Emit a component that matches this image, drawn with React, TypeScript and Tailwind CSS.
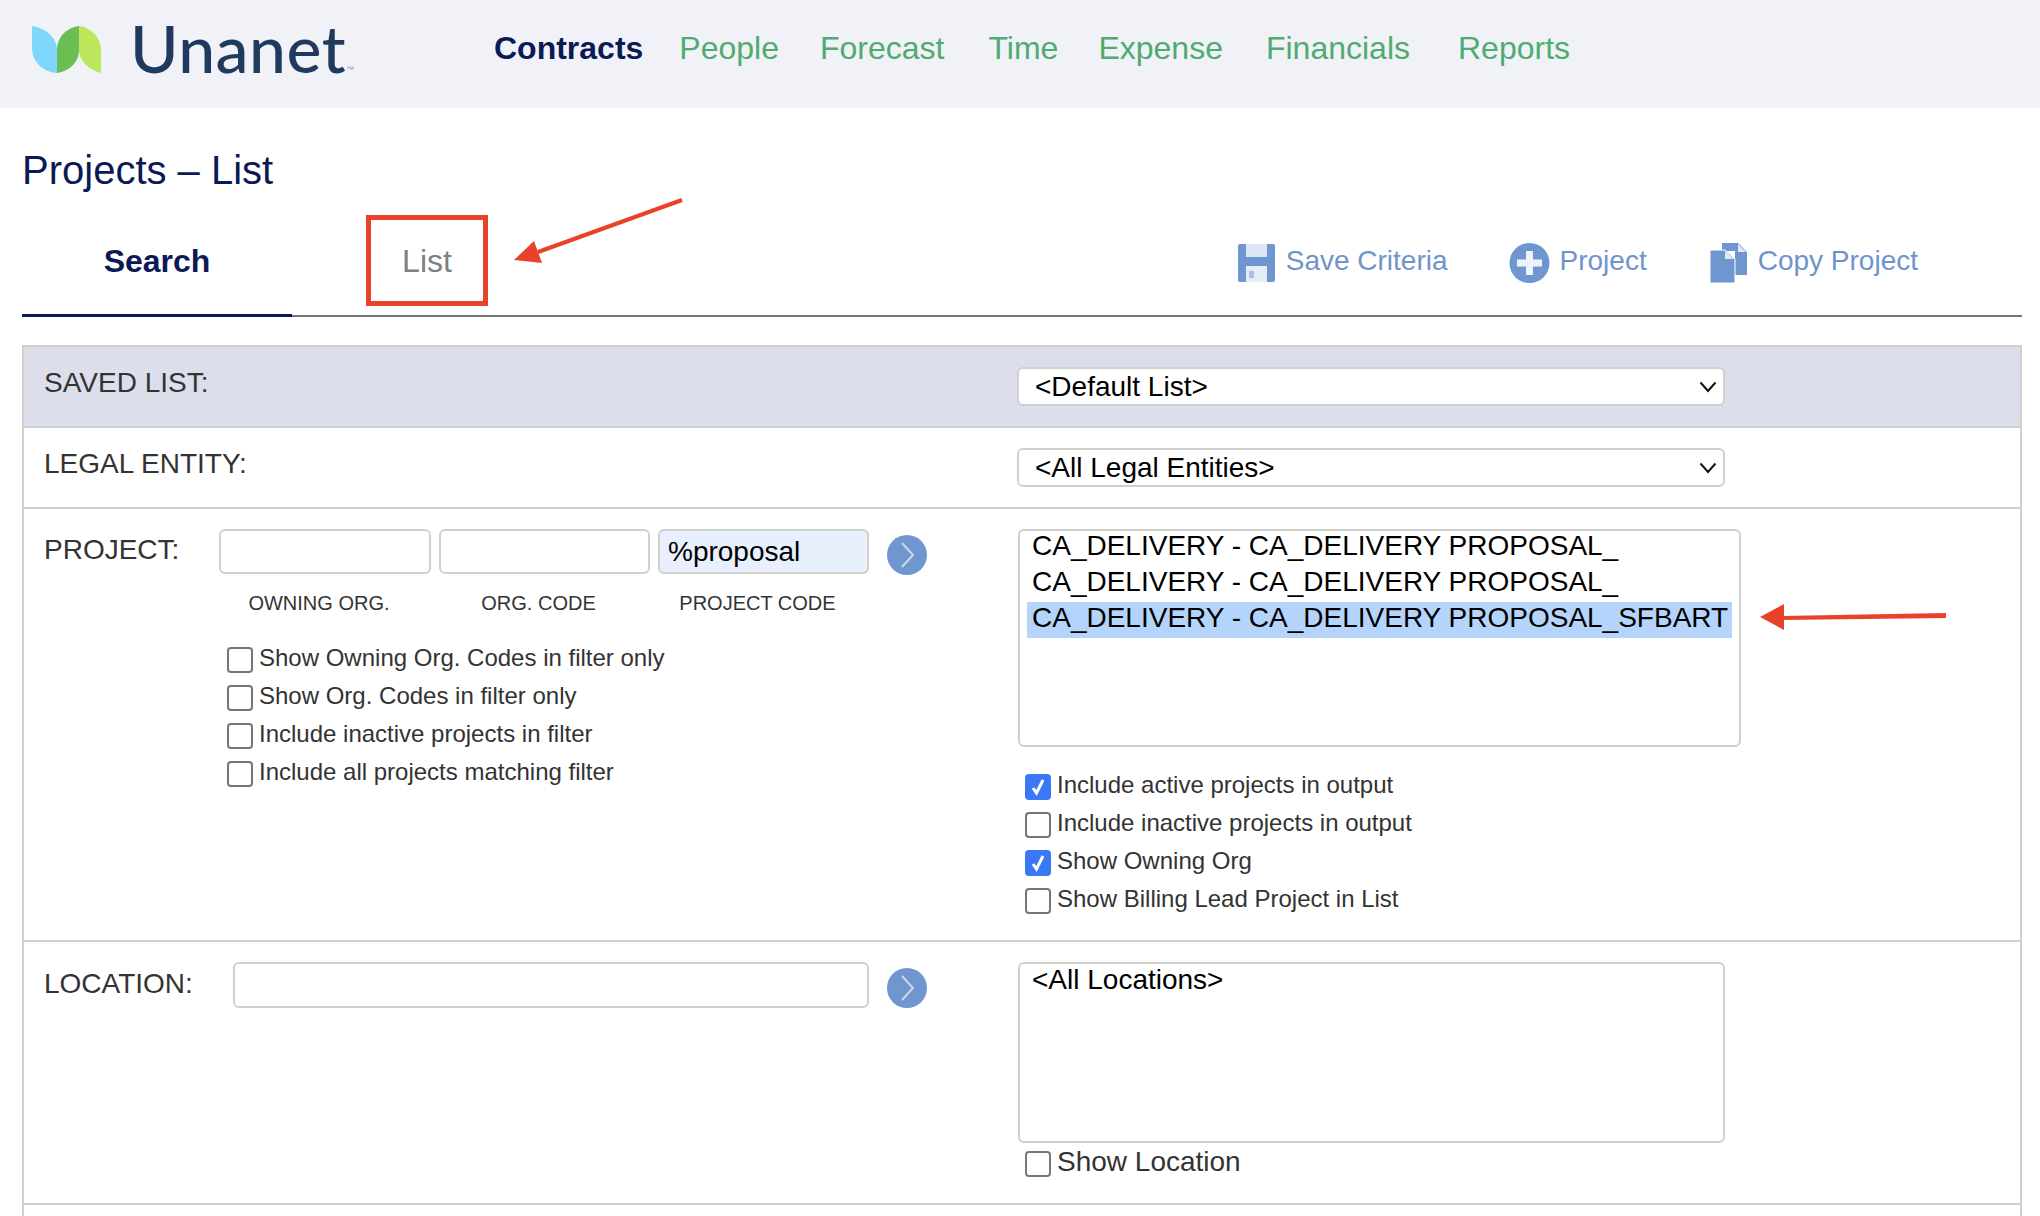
import { ReactNode } from 'react'

const navItems = [
  { label: 'People', className: 'ml-[36px]' },
  { label: 'Forecast', className: 'ml-[41px]' },
  { label: 'Time', className: 'ml-[44px]' },
  { label: 'Expense', className: 'ml-[40px]' },
  { label: 'Financials', className: 'ml-[43px]' },
  { label: 'Reports', className: 'ml-[48px]' },
]

function Logo() {
  return (
    <div className="flex items-start">
      <svg width="72" height="48" viewBox="0 0 72 48">
        <path d="M0 0C14 2 25 12 25 24V47C11 46 0 36 0 22Z" fill="#7fd6fd" />
        <path d="M47 0C33 2 25 12 25 24V47C38 45 47 36 47 24Z" fill="#6bbf52" />
        <path d="M47 0C60 2 69 12 69 24V47C57 44 47 35 47 24Z" fill="#bce65c" />
      </svg>
      <span className="ml-[26px] mt-[-2px] font-['Lato',sans-serif] text-[66px] font-medium leading-[48px] tracking-[0.5px] text-[#1f3a5c]">
        Unanet
      </span>
      <span className="mt-[40px] text-[8px] leading-[8px] text-[#8a97a8]">™</span>
    </div>
  )
}

function Chevron() {
  return (
    <svg width="40" height="40" viewBox="0 0 40 40" className="shrink-0">
      <circle cx="20" cy="20" r="20" fill="#7096cf" />
      <path d="M15 8L26 20L15 32" fill="none" stroke="#c9d8ef" strokeWidth="2" />
    </svg>
  )
}

function Check({ checked = false }: { checked?: boolean }) {
  if (checked) {
    return (
      <span className="flex h-[26px] w-[26px] shrink-0 items-center justify-center rounded-[4px] bg-[#3b78f5]">
        <svg width="18" height="20" viewBox="0 0 18 20">
          <path d="M4 11L7.500 16L14 3" fill="none" stroke="#fff" strokeWidth="3" />
        </svg>
      </span>
    )
  }
  return <span className="h-[26px] w-[26px] shrink-0 rounded-[4px] border-2 border-[#767676] bg-white" />
}

function CheckRow({ label, checked, large }: { label: string; checked?: boolean; large?: boolean }) {
  return (
    <div className="flex h-[26px] items-center gap-[6px]">
      <Check checked={checked} />
      <span className={`${large ? 'text-[28px]' : 'text-[24px]'} mt-[-4px] leading-[26px] text-[#333]`}>{label}</span>
    </div>
  )
}

function FakeSelect({ label }: { label: string }) {
  return (
    <div className="flex h-[39px] w-[708px] items-center justify-between rounded-[6px] border-2 border-[#d0d0cc] bg-white pl-[16px] pr-[6px]">
      <span className="text-[28px] leading-[34px] text-black">{label}</span>
      <svg width="18" height="12" viewBox="0 0 18 12">
        <path d="M1.5 1.5L9 10L16.5 1.5" fill="none" stroke="#111" strokeWidth="2" />
      </svg>
    </div>
  )
}

function TextInput({ className, value }: { className: string; value?: string }) {
  return (
    <input
      readOnly
      value={value ?? ''}
      className={`${className} rounded-[6px] border-2 border-[#d0d0cc] px-[8px] text-[28px] text-black outline-none`}
    />
  )
}

function FieldCaption({ children, className }: { children: ReactNode; className: string }) {
  return <div className={`${className} pr-[12px] text-center text-[20px] leading-[24px] text-[#333]`}>{children}</div>
}

export default function App() {
  return (
    <div className="relative h-[1216px] w-full overflow-hidden bg-white font-['Liberation_Sans',Arial,sans-serif]">
      <header className="flex h-[108px] items-start bg-[#f0f2f8] pl-[32px] pt-[26px]">
        <div className="w-[462px] shrink-0">
          <Logo />
        </div>
        <nav className="flex text-[32px] leading-[44px] text-[#4fab6f]">
          <span className="font-bold text-[#0b1a55]">Contracts</span>
          {navItems.map((item) => (
            <span key={item.label} className={item.className}>
              {item.label}
            </span>
          ))}
        </nav>
      </header>

      <h1 className="flex h-[107px] items-start pl-[22px] pt-[38px] text-[40px] leading-[48px] text-[#0b1a55]">
        Projects – List
      </h1>

      {/* Tabs and actions */}
      <div className="ml-[22px] mr-[18px] flex h-[102px] items-start border-b-[2px] border-[#767676]">
        <div className="relative h-[100px] w-[270px] pt-[26px] text-center text-[32px] font-bold leading-[40px] text-[#0b1a55]">
          Search
          <div className="absolute bottom-[-2px] left-0 h-[3px] w-full bg-[#0b1a55]" />
        </div>
        <div className="ml-[74px] flex h-[91px] w-[122px] items-center justify-center border-[5px] border-[#e8432a] text-[32px] leading-[40px] text-[#808080]">
          List
        </div>
        <div className="ml-auto mr-[104px] mt-[24px] flex items-center text-[28px] leading-[40px] text-[#6f93cb]">
          <svg width="37" height="38" viewBox="0 0 37 38" className="mr-[11px] mt-[4px]">
            <path d="M0 2Q0 0 2 0H35Q37 0 37 2V36Q37 38 35 38H2Q0 38 0 36Z" fill="#7096cf" />
            <rect x="8" y="0" width="21" height="13" fill="#dde6f4" />
            <rect x="8" y="22" width="21" height="16" fill="#e6edf7" />
            <rect x="11" y="27" width="5" height="7" fill="#a9c0e2" />
          </svg>
          <span>Save Criteria</span>
          <svg width="41" height="40" viewBox="0 0 41 40" className="ml-[61px] mr-[10px] mt-[4px]">
            <circle cx="20.500" cy="20" r="20" fill="#7096cf" />
            <path d="M17 8H24V16.500H33V23.500H24V32H17V23.500H8V16.500H17Z" fill="#eef3fa" />
          </svg>
          <span>Project</span>
          <svg width="37" height="40" viewBox="0 0 37 40" className="ml-[63px] mr-[11px] mt-[4px]">
            <path d="M12 0H28L37 9V32H25V8H12Z" fill="#7096cf" />
            <path d="M0 7H15L25 16V40H0Z" fill="#7096cf" stroke="#fff" strokeWidth="1" />
            <path d="M15 8V16H24Z" fill="#dfe7f4" />
            <path d="M28 1V9H36Z" fill="#dfe7f4" />
          </svg>
          <span>Copy Project</span>
        </div>
      </div>

      {/* Search form */}
      <div className="ml-[22px] mr-[18px] mt-[28px] border-x-2 border-t-2 border-[#d0d0cc] pb-[200px] text-[28px] text-[#333]">
        <div className="flex h-[81px] border-b-2 border-[#d0d0cc] bg-[#dcdfeb] pt-[20px]">
          <div className="w-[993px] pl-[20px] text-[28px] leading-[32px]">SAVED LIST:</div>
          <FakeSelect label="<Default List>" />
        </div>

        <div className="flex h-[81px] border-b-2 border-[#d0d0cc] pt-[20px]">
          <div className="w-[993px] pl-[20px] text-[28px] leading-[32px]">LEGAL ENTITY:</div>
          <FakeSelect label="<All Legal Entities>" />
        </div>

        <div className="flex h-[433px] border-b-2 border-[#d0d0cc] pt-[20px]">
          <div className="w-[994px] shrink-0 pl-[20px]">
            <div className="flex">
              <div className="mt-[5px] w-[175px] shrink-0 text-[28px] leading-[32px]">PROJECT:</div>
              <div>
                <div className="flex items-start gap-[8px]">
                  <TextInput className="h-[45px] w-[212px] bg-white" />
                  <TextInput className="h-[45px] w-[211px] bg-white" />
                  <TextInput className="h-[45px] w-[211px] bg-[#e8f0fe]" value="%proposal" />
                  <div className="ml-[10px] mt-[6px]">
                    <Chevron />
                  </div>
                </div>
                <div className="mt-[16px] flex gap-[8px]">
                  <FieldCaption className="w-[212px]">OWNING ORG.</FieldCaption>
                  <FieldCaption className="w-[211px]">ORG. CODE</FieldCaption>
                  <FieldCaption className="w-[211px]">PROJECT CODE</FieldCaption>
                </div>
                <div className="ml-[8px] mt-[32px] flex flex-col gap-[12px]">
                  <CheckRow label="Show Owning Org. Codes in filter only" />
                  <CheckRow label="Show Org. Codes in filter only" />
                  <CheckRow label="Include inactive projects in filter" />
                  <CheckRow label="Include all projects matching filter" />
                </div>
              </div>
            </div>
          </div>
          <div>
            <div className="h-[218px] w-[723px] rounded-[6px] border-2 border-[#d0d0cc] bg-white px-[7px] text-[28px] leading-[36px] text-black">
              <div className="mt-[-3px] pl-[5px]">CA_DELIVERY - CA_DELIVERY PROPOSAL_</div>
              <div className="pl-[5px]">CA_DELIVERY - CA_DELIVERY PROPOSAL_</div>
              <div className="mt-[2px] h-[36px] whitespace-nowrap bg-[#b5d4fb] pl-[5px] leading-[32px]">
                CA_DELIVERY - CA_DELIVERY PROPOSAL_SFBART
              </div>
            </div>
            <div className="ml-[7px] mt-[27px] flex flex-col gap-[12px]">
              <CheckRow checked label="Include active projects in output" />
              <CheckRow label="Include inactive projects in output" />
              <CheckRow checked label="Show Owning Org" />
              <CheckRow label="Show Billing Lead Project in List" />
            </div>
          </div>
        </div>

        <div className="flex h-[263px] border-b-2 border-[#d0d0cc] pt-[20px]">
          <div className="flex w-[994px] shrink-0 items-start pl-[20px]">
            <div className="mt-[6px] w-[189px] shrink-0 text-[28px] leading-[32px]">LOCATION:</div>
            <TextInput className="h-[46px] w-[636px] bg-white" />
            <div className="ml-[18px] mt-[6px]">
              <Chevron />
            </div>
          </div>
          <div>
            <div className="h-[181px] w-[707px] rounded-[6px] border-2 border-[#d0d0cc] bg-white pl-[12px] text-[28px] leading-[32px] text-black">
              &lt;All Locations&gt;
            </div>
            <div className="ml-[7px] mt-[8px]">
              <CheckRow large label="Show Location" />
            </div>
          </div>
        </div>
      </div>

      {/* Red annotation arrows */}
      <svg width="180" height="75" viewBox="0 0 180 75" className="absolute left-[510px] top-[195px]">
        <path d="M172 5L28 57" fill="none" stroke="#e8432a" strokeWidth="4" />
        <path d="M4 65L24 46L32 68Z" fill="#e8432a" />
      </svg>
      <svg width="195" height="32" viewBox="0 0 195 32" className="absolute left-[1756px] top-[601px]">
        <path d="M26 15L190 12V17L26 19Z" fill="#e8432a" />
        <path d="M4 16L28 3V29Z" fill="#e8432a" />
      </svg>
    </div>
  )
}
